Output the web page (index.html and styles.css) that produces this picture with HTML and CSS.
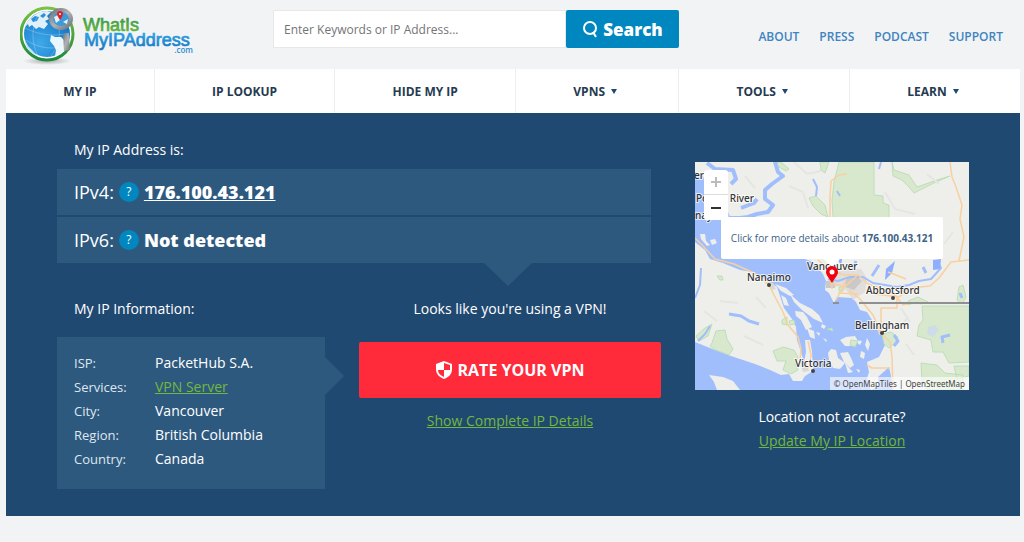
FILE: index.html
```html
<!DOCTYPE html>
<html lang="en">
<head>
  <meta charset="UTF-8">
  <meta name="viewport" content="width=device-width, initial-scale=1">
  <title>WhatIsMyIPAddress.com</title>
  <link rel="stylesheet" href="styles.css">
</head>
<body>
  <header class="header">
    <a class="logo" href="#" aria-label="WhatIsMyIPAddress.com">
      <svg width="180" height="62" viewBox="0 0 180 62">
        <defs>
          <linearGradient id="ring" x1="0" y1="0" x2="0" y2="1">
            <stop offset="0" stop-color="#7cc142"/>
            <stop offset="1" stop-color="#1e8a3c"/>
          </linearGradient>
          <linearGradient id="green" x1="0" y1="0" x2="0" y2="1">
            <stop offset="0.2" stop-color="#3f9c45"/>
            <stop offset="1" stop-color="#6cbb3c"/>
          </linearGradient>
          <linearGradient id="blue" x1="0" y1="0" x2="0" y2="1">
            <stop offset="0.2" stop-color="#2c9fe0"/>
            <stop offset="1" stop-color="#1673c0"/>
          </linearGradient>
          <linearGradient id="metal" x1="0" y1="0" x2="1" y2="1">
            <stop offset="0" stop-color="#6f7377"/>
            <stop offset="0.5" stop-color="#b0b3b6"/>
            <stop offset="1" stop-color="#707478"/>
          </linearGradient>
          <radialGradient id="globe" cx="0.35" cy="0.7" r="0.7">
            <stop offset="0" stop-color="#3fa9ea"/>
            <stop offset="1" stop-color="#1478c6"/>
          </radialGradient>
          <radialGradient id="shadow">
            <stop offset="0" stop-color="#999" stop-opacity="0.8"/>
            <stop offset="1" stop-color="#999" stop-opacity="0"/>
          </radialGradient>
        </defs>
        <ellipse cx="27" cy="57" rx="24" ry="4" fill="url(#shadow)"/>
        <circle cx="27" cy="30" r="26" fill="#fff" stroke="url(#ring)" stroke-width="3"/>
        <circle cx="27" cy="30" r="23" fill="url(#globe)"/>
        <path d="M8 17c5-6 11-10 19-10l4 1-4 4 2 3-4 2 3 3-4 5-5-2-3 2-4-4-3 2-1-3-4 4z" fill="#dff0fb"/>
        <path d="M11 15l4-3 4 1-2 4-4 1zM20 12l4-3 2 2-3 3z" fill="#2d8fd8"/>
        <path d="M31 31l4 2 6 0 5 5 0 5-5 7-6 2 1-6-2-4-4-5z" fill="#eaf6fd"/>
        <path d="M5 36l3 6 5 5 4 5C10 49 5 43 5 36z" fill="#bfe2f8"/>
        <g fill="none" stroke="#fff" stroke-opacity="0.4" stroke-width="0.6">
          <path d="M5 24c14 7 29 9 44 5M6 36c13 9 29 10 41 5M20 8c-9 13-9 30-2 44M34 9c8 14 7 31-3 43"/>
        </g>
        <path d="M43 30l6-1 1 17-6 1z" fill="url(#metal)"/>
        <ellipse cx="41" cy="15" rx="10" ry="9" fill="#3b9ad7" stroke="url(#metal)" stroke-width="4"/>
        <path d="M34 13l4-2 2 5-4 3zM43 18l5-3-1 5z" fill="#e7f2fa"/>
        <path d="M40 16c-2-3-3-5-3-6a3 3 0 0 1 6 0c0 1-1 3-3 6z" fill="#e01f26"/>
        <circle cx="40" cy="10" r="1" fill="#fff"/>
        <text class="logo-text" x="63" y="27" fill="url(#green)" stroke="url(#green)">WhatIs</text>
        <text class="logo-text" x="64" y="42" fill="url(#blue)" stroke="url(#blue)">MyIPAddress</text>
        <text class="logo-com" x="173" y="49" text-anchor="end" fill="#2c8fd0">.com</text>
      </svg>
    </a>
    <form class="search" onsubmit="return false">
      <input class="search-input" type="text" placeholder="Enter Keywords or IP Address..." aria-label="Enter Keywords or IP Address">
      <button class="search-button" type="submit">
        <svg width="16" height="18" viewBox="0 0 16 18" fill="none" stroke="#fff" stroke-width="2">
          <circle cx="8" cy="8" r="6"/>
          <path d="M11 12l3 5"/>
        </svg>
        Search
      </button>
    </form>
    <nav class="top-links">
      <a href="#">ABOUT</a>
      <a href="#">PRESS</a>
      <a href="#">PODCAST</a>
      <a href="#">SUPPORT</a>
    </nav>
  </header>

  <nav class="menu">
    <a href="#">MY IP</a>
    <a href="#">IP LOOKUP</a>
    <a href="#">HIDE MY IP</a>
    <a href="#">VPNS <span class="caret"></span></a>
    <a href="#">TOOLS <span class="caret"></span></a>
    <a href="#">LEARN <span class="caret"></span></a>
  </nav>

  <main class="hero">
    <div class="details">
      <h2 class="title">My IP Address is:</h2>
      <div class="addresses">
        <div class="address">
          <span>IPv4:</span>
          <button class="help" aria-label="What is IPv4?">?</button>
          <a class="ip" href="#">176.100.43.121</a>
        </div>
        <div class="address">
          <span>IPv6:</span>
          <button class="help" aria-label="What is IPv6?">?</button>
          <strong>Not detected</strong>
        </div>
      </div>

      <div class="lower">
        <section>
          <h2 class="title">My IP Information:</h2>
          <div class="info">
            <table>
              <tr><th scope="row">ISP:</th><td>PacketHub S.A.</td></tr>
              <tr><th scope="row">Services:</th><td><a class="green-link" href="#">VPN Server</a></td></tr>
              <tr><th scope="row">City:</th><td>Vancouver</td></tr>
              <tr><th scope="row">Region:</th><td>British Columbia</td></tr>
              <tr><th scope="row">Country:</th><td>Canada</td></tr>
            </table>
          </div>
        </section>
        <section class="vpn">
          <p class="vpn-text">Looks like you're using a VPN!</p>
          <button class="rate">
            <svg width="16" height="18" viewBox="0 0 16 18">
              <path d="M8 0l8 3v5c0 5-3 8-8 10-5-2-8-5-8-10V3z" fill="#fff"/>
              <path d="M8 2l6 2v5H8zM8 9v7c-4-2-6-4-6-7z" fill="#ff2a3a"/>
            </svg>
            RATE YOUR VPN
          </button>
          <a class="green-link" href="#">Show Complete IP Details</a>
        </section>
      </div>
    </div>

    <aside class="location">
      <div class="map">
        <svg class="map-canvas" viewBox="0 0 274 228" preserveAspectRatio="xMidYMid slice">
          <rect width="274" height="228" fill="#a1befc"/>
          <!-- mainland -->
          <path d="M0 0H274V228H198L196 214 194 205 183 215 184 224 176 228 172 216 174 210 172 200 184 195 190 183 188 174 182 167 177 158 172 150 165 148 161 140 157 136 142 135 139 141 134 131 130 128 131 119 128 112 118 100 110 97 80 80 50 54 35 54 30 45 22 35 12 30 8 14 0 10Z" fill="#eeeeea"/>
          <!-- Vancouver Island -->
          <path d="M0 80L10 88 15 97 28 101 45 108 58 110 70 117 82 125 85 134 89 146 97 157 101 165 102 178 106 190 109 200 111 190 110 178 115 178 117 190 118 209 110 214 107 219 98 219 94 212 86 213 75 208 60 202 36 194 20 188 0 180Z" fill="#eeeeea"/>
          <path d="M14 213l14 2 10 4 7 9H22l-3-8z" fill="#eeeeea"/>
          <!-- islands -->
          <g fill="#eeeeea">
            <path d="M80 122l11 4 8 7-4 1-9-5zM86 133l5 3 3 8-5-1zM95 132l10 9 12 6 7 6 4 8-9-4-12-9-8-8zM100 149l8 1 4 5 5 10-6 3-5-10-5-4zM112 166l7 3 1 8-5-2zM127 162l4 2-2 3-3-2zM121 170l4 1-1 3zM145 178l6-3 9-1 3 5-5 5-8 0zM136 187l5 1 2 8 7 5-5 6-7-1-4-8-1-7zM145 191l8-1 3 6 3 7-4 3-6-6zM150 201l5 6 3 3-5 1zM166 189l4 2-1 6-4-2zM172 176l3 6-2 7-3-6zM159 178l8 1-2 4zM174 200l5-2 1 10-5 2zM5 72l5 0 1 7 4 4-3 1-6-7zM15 78l5-1 2 4-5 2zM128 176l4 2-1 2zM161 207l4 1-1 3z"/>
          </g>
          <!-- parks -->
          <g fill="#d8e8cd" stroke="#b5dbaf" stroke-width="0.8">
            <path d="M144 0l-5 20-2 18 1 18h56V43l-6-2V34l-9-1V0zM197 0l2 8 15 5 8 12 20-7 13-4-16 7-20 10-5-6-7-7-9-4zM114 36l7-2 9 9 3 12-7-3-8-8zM78 1l8-1 8 7-3 2-9-5zM125 0h9l-4 11-4-3z"/>
            <path d="M227 144h47v56l-20 1-6-11-10 0-2-12-14-4 2-11 4-5zM226 201l16 2 8 8 18 2v15h-35l-6-8zM264 125l4-2 3 12-4 7-5-4zM213 139l10-4 10 5-7 2-5-2-8 3zM259 204h15v10l-12 3z"/>
            <path d="M1 174l9-8 7-4-4 12-9 5zM17 181l4-12 9-1 2 9 6 10-4 6-13-5-6-4zM78 189l10-4 11 3 4 7-3 7 3 6-7 4-8-4 3-9-9 0zM87 158l5-3 0 8-5-1zM94 159l5-1 1 4-5 1zM22 114l5 0 1 4-3 0zM156 178l7 1-3 6-5-2zM187 172l9-2 7 5-3 6-6 5-5-4zM144 125l5 0-1 4-4 0zM132 167l5-1 1 3z"/>
          </g>
          <!-- city blocks -->
          <path d="M142 110l10-3 14 0 6 9-2 14-12 8-6-9-8-5-8 2-3-8z" fill="#e1dedb"/>
          <path d="M131 119l8 0 1 7-9 0zM151 116l9-3 7 6-8 9-9-3z" fill="#cbc8c8"/>
          <path d="M71 118l7 3 3 6-4 1zM104 197l7 2 3 10-6 1zM182 166l5 3 1 4-4 0z" fill="#dad8d5"/>
          <!-- terrain shading -->
          <g fill="none" stroke="#e5e6e1" stroke-width="2">
            <path d="M94 24l14 6 5 16M50 14l10 12M190 30l10 17 20 5M213 57l20 13 5 16M232 12l12 10M258 70l-9 12M206 146l9 14M212 156l-8 12M211 182l8 11M25 139l18 2M49 174l19 9M61 135l10 11M9 149l13 10M99 0l13 12 14-3M190 62l12 12-4 14"/>
          </g>
          <!-- inlets, lakes and rivers -->
          <g fill="none" stroke="#a1befc" stroke-width="4" stroke-linejoin="round">
            <path d="M12 1l8 6 18 1 3 9-5 5M80 0l3 10 5 4-11 8-7 6 0 9 8 6-5 7-11 2-9 3-16 2M46 46l13-5 3-4"/>
            <path d="M34 152l12 2 8 5 10 3" stroke-width="3"/>
            <path d="M6 106l-1 17-5 13M15 164l-5 8-7 7M118 17l4 8-1 9M186 0l-2 7M142 29l3 5" stroke-width="2"/>
            <path d="M199 173l4 6-4 5M265 131l2 5M158 108l3-9M177 114l7-11M248 181l-1-6 8-2M228 105l3 6" stroke-width="3"/>
            <path d="M133 117l10 2 12-4 13 0 10 6 12 2 12 2 12-2 10-4 12-2 10-11-2-4" stroke-width="2"/>
          </g>
          <path d="M238 98l8-1-1 10-7 1zM191 107l9-8-3 12-7 7zM143 97l4 0-1 8z" fill="#8eafff"/>
          <path d="M233 165l7-2 4 5-6 7-6-3z" fill="#ccdde7"/>
          <!-- highways -->
          <g fill="none" stroke="#f8d0a0" stroke-width="1.5" stroke-linejoin="round">
            <path d="M0 76l8 8 12 13 19 5 20 9 15 12 5 10 9 17 5 13 10 12 3 12-1 12M113 179l3 14-2 13M123 98l14 12 13 3 13 0 10 9 15 5 12 6 8 10 8-2M141 138l6-11 16-14M151 117l-4 10M154 128l11 9 13 16 8 18 9 9 2 15 1 33M137 127l-1-14 10-2M143 131l20 1M186 171l0-25h16v-11M195 206l-18 0-5-3M135 121l15 4"/>
            <path d="M135 62l0-27 1-16 8-6 8-1M255 0l2 15 4 10 6 18-2 14 4 18-5 24M180 132l24 3 11-9 20-2 9-8 12-16 18-2M193 110l8 3 10 4"/>
          </g>
          <path d="M164 141h110M138 141h6" stroke="#8f8f91" stroke-width="2"/>
          <g class="places">
            <text x="-1" y="17">er</text>
            <text x="1" y="40">Powell River</text>
            <text x="0" y="57">naymo</text>
            <text x="112" y="108">Vancouver</text>
            <text x="52" y="119">Nanaimo</text>
            <text x="171" y="132">Abbotsford</text>
            <text x="160" y="167">Bellingham</text>
            <text x="100" y="205">Victoria</text>
          </g>
          <g fill="#444">
            <circle cx="74" cy="123" r="2"/>
            <circle cx="198" cy="136" r="2"/>
            <circle cx="187" cy="171" r="2"/>
            <circle cx="118" cy="209" r="2"/>
          </g>
        </svg>
        <div class="zoom">
          <button class="zoom-in" aria-label="Zoom in" disabled></button>
          <button class="zoom-out" aria-label="Zoom out"></button>
        </div>
        <a class="popup" href="#">Click for more details about <b>176.100.43.121</b></a>
        <svg class="pin" width="12" height="17" viewBox="0 0 12 17">
          <path d="M6 17C3 12 0 9 0 6a6 6 0 0 1 12 0c0 3-3 6-6 11z" fill="#f20010"/>
          <circle cx="6" cy="6" r="2.500" fill="#fff"/>
        </svg>
        <div class="credits">© <a href="#">OpenMapTiles</a> | <a href="#">OpenStreetMap</a></div>
      </div>
      <p class="accurate">Location not accurate?</p>
      <a class="green-link" href="#">Update My IP Location</a>
    </aside>
  </main>
</body>
</html>
```
FILE: styles.css
```css
* {
  box-sizing: border-box;
}

body {
  margin: 0;
  padding: 0 4px 0 6px;
  background: #f1f3f5;
  color: #fff;
  font-family: "Open Sans", sans-serif;
  font-size: 14px;
  font-weight: 500;
}

button,
input {
  font-family: inherit;
}

button {
  border: none;
  cursor: pointer;
}

a {
  color: inherit;
  text-decoration: none;
}

/* Header */
.header {
  display: flex;
  height: 69px;
  padding: 0 17px 0 14px;
}

.logo {
  width: 253px;
  padding-top: 4px;
}

.logo svg {
  display: block;
}

.logo-text {
  font-family: "Liberation Sans", Arial, sans-serif;
  font-size: 18px;
  font-weight: 400;
  stroke-width: 0.7px;
}

.logo-com {
  font-size: 8px;
  font-weight: 600;
}

.search {
  display: flex;
  width: 406px;
  height: 38px;
  margin-top: 10px;
}

.search-input {
  flex: 1;
  min-width: 0;
  padding: 0 10px;
  border: 1px solid #e6e8ea;
  background: #fff;
  color: #333;
  font-size: 12px;
}

.search-input::placeholder {
  color: #757575;
}

.search-button {
  display: flex;
  align-items: center;
  justify-content: center;
  gap: 5px;
  width: 113px;
  padding: 0;
  border-radius: 2px;
  background: #0087bf;
  color: #fff;
  font-size: 17px;
  font-weight: 800;
}

.top-links {
  display: flex;
  gap: 20px;
  margin: 29px 0 0 auto;
  color: #3f83c0;
  font-size: 12px;
  font-weight: 600;
  line-height: 16px;
}

/* Main menu */
.menu {
  display: flex;
  height: 44px;
  background: #fff;
  color: #263a50;
  font-size: 12px;
  font-weight: 700;
}

.menu a {
  display: flex;
  flex: 1 1 auto;
  align-items: center;
  justify-content: center;
  gap: 6px;
}

.menu a + a {
  border-left: 1px solid #eceef1;
}

.caret {
  margin-right: 4px;
  border: 3px solid transparent;
  border-top: 5px solid #204972;
  border-bottom: 0;
}

/* Blue area */
.hero {
  display: grid;
  grid-template-columns: 1fr 274px;
  gap: 34px;
  padding: 26px 51px 27px;
  background: #204972;
}

.title {
  margin: 0 17px;
  font-size: 14px;
  font-weight: 500;
  line-height: 22px;
}

.addresses {
  position: relative;
  display: grid;
  gap: 2px;
  margin: 8px 10px 0 0;
}

.addresses::after {
  content: "";
  position: absolute;
  top: 100%;
  left: 427px;
  border: 24px solid transparent;
  border-top: 23px solid #2d597f;
  border-bottom: 0;
}

.address {
  display: flex;
  align-items: center;
  gap: 5px;
  height: 46px;
  padding: 0 17px;
  background: #2d597f;
  font-size: 18px;
  font-weight: 400;
}

.address strong {
  font-weight: 800;
}

.help {
  width: 20px;
  height: 20px;
  padding: 0;
  border-radius: 50%;
  background: #0087bf;
  color: #fff;
  font-size: 12px;
  line-height: 20px;
}

.ip {
  font-weight: 800;
  text-decoration: underline;
}

.lower {
  display: grid;
  grid-template-columns: 268px 1fr;
  gap: 34px;
  margin-top: 35px;
}

.info {
  position: relative;
  margin-top: 17px;
  padding: 14px 17px 18px;
  background: #2d597f;
}

.info::after {
  content: "";
  position: absolute;
  top: 20px;
  left: 100%;
  border: 19px solid transparent;
  border-left-color: #2d597f;
  border-right: 0;
}

.info table {
  border-collapse: collapse;
}

.info th,
.info td {
  height: 24px;
  padding: 0;
  text-align: left;
  line-height: 20px;
}

.info th {
  width: 81px;
  color: #dfe7ee;
  font-size: 13px;
  font-weight: 500;
}

.green-link {
  color: #74b73e;
  text-decoration: underline;
  line-height: 20px;
}

.vpn {
  display: flex;
  flex-direction: column;
  align-items: center;
}

.vpn-text {
  margin: 0;
  line-height: 22px;
}

.rate {
  display: flex;
  align-items: center;
  justify-content: center;
  gap: 6px;
  width: 100%;
  height: 56px;
  margin: 22px 0 13px;
  border-radius: 2px;
  background: #ff2a3a;
  color: #fff;
  font-size: 16px;
  font-weight: 700;
}

/* Map */
.location {
  padding-top: 23px;
  text-align: center;
}

.map {
  position: relative;
  height: 228px;
  overflow: hidden;
}

.map-canvas {
  display: block;
  width: 100%;
  height: 100%;
}

.places {
  fill: #333;
  stroke: #fff;
  stroke-opacity: 0.7;
  stroke-width: 2px;
  paint-order: stroke;
  font-family: "Noto Sans", sans-serif;
  font-size: 10px;
}

.zoom {
  position: absolute;
  top: 8px;
  left: 9px;
  width: 24px;
  border-radius: 3px;
  background: #fff;
}

.zoom button {
  display: grid;
  place-content: center;
  width: 24px;
  height: 25px;
  padding: 0;
  background: none;
}

.zoom .zoom-in {
  border-bottom: 1px solid #ddd;
  color: #bbb;
}

.zoom .zoom-out {
  color: #333;
}

.zoom button::before,
.zoom-in::after {
  content: "";
  grid-area: 1 / 1;
  place-self: center;
  width: 10px;
  height: 2px;
  background: currentColor;
}

.zoom .zoom-in::after {
  width: 2px;
  height: 10px;
}

.popup {
  position: absolute;
  top: 55px;
  left: 26px;
  width: 222px;
  border-radius: 2px;
  background: #fff;
  color: #3d6286;
  font-size: 10px;
  line-height: 42px;
  white-space: nowrap;
}

.popup::after {
  content: "";
  position: absolute;
  top: 100%;
  left: 103px;
  border: 8px solid transparent;
  border-top-color: #fff;
  border-bottom: 0;
}

.pin {
  position: absolute;
  top: 104px;
  left: 131px;
}

.credits {
  position: absolute;
  right: 0;
  bottom: 0;
  padding: 0 4px;
  background: rgba(255, 255, 255, 0.6);
  color: #444;
  font-family: "Noto Sans", sans-serif;
  font-size: 8px;
  font-weight: 400;
  line-height: 13px;
}

.accurate {
  margin: 17px 0 4px;
  line-height: 20px;
}
```
